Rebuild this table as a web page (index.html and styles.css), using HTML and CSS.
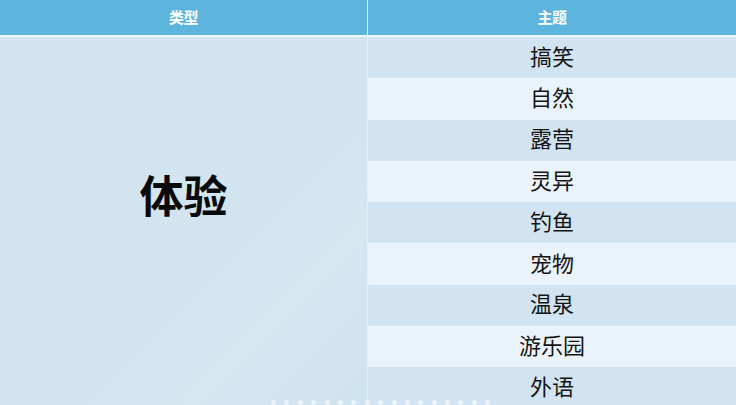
FILE: index.html
```html
<!DOCTYPE html>
<html lang="zh">
<head>
<meta charset="utf-8">
<link rel="stylesheet" href="styles.css">
</head>
<body>
<div class="page">
  <div class="table">
    <div class="head">
      <div class="th">类型</div>
      <div class="th">主题</div>
    </div>
    <div class="body">
      <div class="type-cell">体验</div>
      <div class="topics">
        <div class="row dark">搞笑</div>
        <div class="row light">自然</div>
        <div class="row dark">露营</div>
        <div class="row light">灵异</div>
        <div class="row dark">钓鱼</div>
        <div class="row light">宠物</div>
        <div class="row dark">温泉</div>
        <div class="row light">游乐园</div>
        <div class="row dark">外语</div>
      </div>
    </div>
  </div>
  <div class="dots">
    <span></span><span></span><span></span><span></span><span></span><span></span><span></span><span></span><span></span><span></span><span></span><span></span><span></span><span></span><span></span><span></span><span></span>
  </div>
</div>
</body>
</html>
```
FILE: styles.css
```css
html, body {
  margin: 0;
  padding: 0;
}
body {
  width: 736px;
  height: 405px;
  overflow: hidden;
  background: #d3e5f1;
  font-family: "Noto Sans CJK SC", "Noto Sans", sans-serif;
}
.page {
  position: relative;
  width: 736px;
  height: 405px;
  overflow: hidden;
}
.table {
  display: flex;
  flex-direction: column;
  width: 736px;
}
.head {
  display: grid;
  grid-template-columns: 367px 1fr;
  column-gap: 1px;
  height: 35px;
  background: #e6f1f8;
  border-bottom: 2px solid #eef6fb;
}
.th {
  background: #5db4dc;
  color: #fff;
  font-weight: 700;
  font-size: 15px;
  display: flex;
  align-items: center;
  justify-content: center;
  padding-bottom: 2px;
  letter-spacing: -0.5px;
}
.body {
  display: grid;
  grid-template-columns: 367px 1fr;
  column-gap: 1px;
  background: #e4eff7;
}
.type-cell {
  background: linear-gradient(135deg, #d3e5f1 0%, #d1e4f0 55%, #d6e7f2 75%, #cfe2ef 100%);
  display: flex;
  align-items: center;
  justify-content: center;
  font-size: 44px;
  font-weight: 700;
  color: #0a0a0a;
  padding-bottom: 58px;
  letter-spacing: 0;
}
.topics {
  display: flex;
  flex-direction: column;
}
.row {
  height: 41.3px;
  display: flex;
  align-items: center;
  justify-content: center;
  font-size: 22px;
  color: #141414;
  padding-bottom: 6px;
  box-sizing: border-box;
}
.row.dark {
  background: #d2e4f1;
}
.row.light {
  background: #ebf3fa;
  border-top: 1px solid #f3f8fc;
}
.dots {
  position: absolute;
  left: 271px;
  top: 400px;
  display: flex;
  gap: 8.4px;
}
.dots span {
  width: 5px;
  height: 5px;
  border-radius: 50%;
  background: #eef5fa;
}
```
